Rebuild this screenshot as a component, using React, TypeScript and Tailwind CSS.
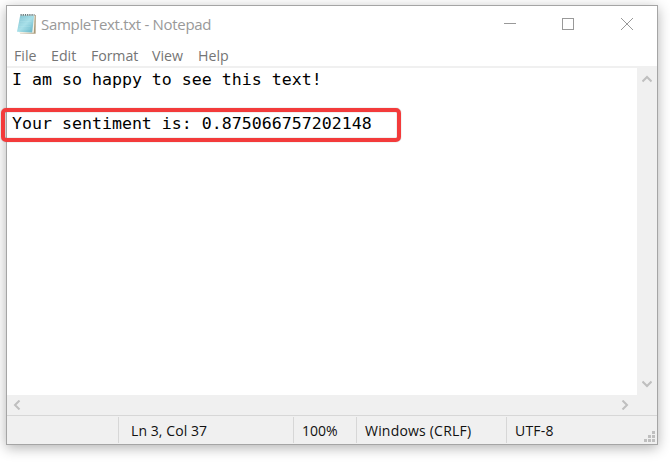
import type { ReactNode } from "react";

function NotepadIcon() {
  return (
    <svg width="22" height="22" viewBox="0 0 22 22" className="shrink-0">
      <defs>
        <linearGradient id="page" x1="0" y1="0" x2="1" y2="1">
          <stop offset="0" stopColor="#7fc0cf" />
          <stop offset="0.5" stopColor="#a6dfe8" />
          <stop offset="1" stopColor="#5fb0c4" />
        </linearGradient>
      </defs>
      <path d="M5 2.5 19.8 2l-.2 18.8L4 20.3z" fill="#a99a79" />
      <path d="M5 2.5 18.8 2l-1 17.8-14.4 .1z" fill="#f5f3e8" />
      <path d="M4.2 2.4h13.9l-1.9 17.2L1 18.8z" fill="url(#page)" />
      <path d="M4 6h12M3.5 8.5h12M3 11h12M2.6 13.5h12M2.1 16h12" stroke="#c4edf2" strokeWidth=".6" opacity=".35" />
      <path d="M4.5 1.8h14" stroke="#62777b" strokeWidth="1.8" strokeDasharray="1.2 1" />
    </svg>
  );
}

function Chevron({ d, w = 10, h = 8 }: { d: string; w?: number; h?: number }) {
  return (
    <svg width={w} height={h} viewBox={`0 0 ${w} ${h}`} className="shrink-0">
      <path d={d} fill="none" stroke="#bfbfbf" strokeWidth="2" />
    </svg>
  );
}

function StatusCell({ className, children }: { className: string; children?: ReactNode }) {
  return <div className={`flex h-[26px] items-center whitespace-nowrap ${className}`}>{children}</div>;
}

export default function App() {
  return (
    <div className="h-[464px] w-[670px] overflow-hidden bg-white pl-[6px] pt-[5px] font-['Open_Sans','Noto_Sans',sans-serif]">
      <div className="relative flex h-[440px] w-[652px] flex-col border border-[#a5a5a5] bg-white shadow-[0_3px_12px_rgba(0,0,0,0.3)]">
        <header className="flex h-[38px] shrink-0 items-center pb-[2px] pl-[9px] text-[#999999]">
          <NotepadIcon />
          <span className="ml-[3px] text-[15px] leading-5 tracking-[-0.31px]">SampleText.txt - Notepad</span>
          <div className="ml-auto mr-[24px] flex items-center gap-[46px]">
            <svg width="12" height="12"><path d="M0 5.5h12" stroke="#999" /></svg>
            <svg width="12" height="12"><rect x=".5" y=".5" width="11" height="11" fill="none" stroke="#999" /></svg>
            <svg width="12" height="12" className="ml-px"><path d="m0 0 12 12m0-12L0 12" stroke="#999" /></svg>
          </div>
        </header>

        <nav className="flex h-[22px] shrink-0 items-center pl-[7px] pt-[2px] text-[14.2px] text-[#757575]">
          <span className="w-[37px]">File</span>
          <span className="w-[40px]">Edit</span>
          <span className="w-[61px] tracking-[-0.1px]">Format</span>
          <span className="w-[46px]">View</span>
          <span>Help</span>
        </nav>
        <div className="h-[2px] shrink-0 bg-[#f0f0f0]" />

        <div className="flex h-[327px] shrink-0">
          <main className="flex-1 whitespace-pre pl-[5px] pt-px font-['DejaVu_Sans_Mono',monospace] text-[16.6px] leading-[22px] text-black">
            <p>I am so happy to see this text!</p>
            <p> </p>
            <p>Your sentiment is: 0.875066757202148</p>
          </main>
          <div className="flex w-[20px] flex-col items-center justify-between bg-[#f0f0f0] pb-[7px] pt-[7px]">
            <Chevron d="M.5 6.5 5 2l4.5 4.5" />
            <Chevron d="M.5 1.5 5 6l4.5-4.5" />
          </div>
        </div>

        <div className="flex h-[20px] shrink-0 items-center justify-between bg-[#f0f0f0] pl-[6px] pr-[28px]">
          <Chevron d="M6.5.5 2 5l4.5 4.5" w={8} h={10} />
          <Chevron d="M1.5.5 6 5 1.5 9.5" w={8} h={10} />
        </div>

        <footer className="flex flex-1 items-center border-t border-[#d7d7d7] bg-[#f0f0f0] text-[14px] text-[#111]">
          <StatusCell className="w-[111px]" />
          <StatusCell className="w-[175px] border-l border-[#d7d7d7] pl-[12px] tracking-[0.08px]">Ln 3, Col 37</StatusCell>
          <StatusCell className="w-[63px] border-l border-[#d7d7d7] pl-[8px]">100%</StatusCell>
          <StatusCell className="w-[150px] border-l border-[#d7d7d7] pl-[8px] tracking-[0.2px]">Windows (CRLF)</StatusCell>
          <StatusCell className="flex-1 border-l border-[#d7d7d7] pl-[8px] tracking-[0.2px]">UTF-8</StatusCell>
          <svg width="11" height="11" className="mb-[2px] mr-[2px] self-end" fill="#bfbfbf">
            <path d="M8 0h3v3H8zM8 4h3v3H8zM8 8h3v3H8zM4 4h3v3H4zM4 8h3v3H4zM0 8h3v3H0z" />
          </svg>
        </footer>

        <div className="absolute left-[-6px] top-[102px] h-[34px] w-[400px] rounded-[5px] border-[4.5px] border-[#f33b3b] shadow-[0_0_1px_#888,inset_0_0_1px_#666]" />
      </div>
    </div>
  );
}
